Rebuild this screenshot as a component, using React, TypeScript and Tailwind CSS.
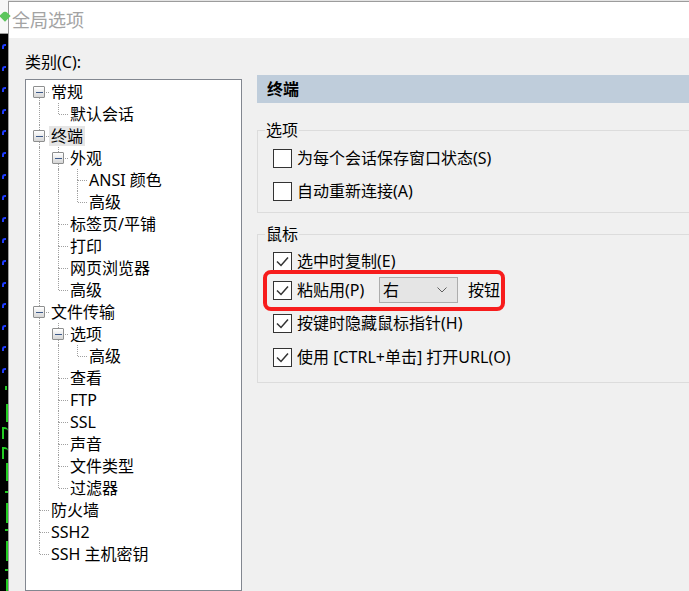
import React from "react";

type Node = { label: string; children?: Node[]; selected?: boolean };

const tree: Node[] = [
  { label: "常规", children: [{ label: "默认会话" }] },
  {
    label: "终端",
    selected: true,
    children: [
      { label: "外观", children: [{ label: "ANSI 颜色" }, { label: "高级" }] },
      { label: "标签页/平铺" },
      { label: "打印" },
      { label: "网页浏览器" },
      { label: "高级" },
    ],
  },
  {
    label: "文件传输",
    children: [
      { label: "选项", children: [{ label: "高级" }] },
      { label: "查看" },
      { label: "FTP" },
      { label: "SSL" },
      { label: "声音" },
      { label: "文件类型" },
      { label: "过滤器" },
    ],
  },
  { label: "防火墙" },
  { label: "SSH2" },
  { label: "SSH 主机密钥" },
];

type Row = {
  label: string;
  level: number;
  anc: boolean[];
  hasNext: boolean;
  first: boolean;
  hasChildren: boolean;
  selected?: boolean;
};

function flatten(nodes: Node[], level: number, anc: boolean[], out: Row[]) {
  nodes.forEach((n, i) => {
    const hasNext = i < nodes.length - 1;
    out.push({
      label: n.label,
      level,
      anc,
      hasNext,
      first: level === 0 && i === 0,
      hasChildren: !!n.children,
      selected: n.selected,
    });
    if (n.children) flatten(n.children, level + 1, [...anc, hasNext], out);
  });
  return out;
}

const rows = flatten(tree, 0, [], []);

function TreeRow({ r }: { r: Row }) {
  return (
    <div className="flex h-[22px] items-center">
      {r.anc.map((a, i) => (
        <div key={i} className="relative h-full w-[19px] shrink-0">
          {a && <div className="absolute left-[9px] top-0 bottom-0 border-l border-dotted border-[#a0a0a0]" />}
        </div>
      ))}
      <div className="relative h-full w-[19px] shrink-0">
        {!r.first && <div className="absolute left-[9px] top-0 h-[11px] border-l border-dotted border-[#a0a0a0]" />}
        {r.hasNext && <div className="absolute left-[9px] top-[11px] bottom-0 border-l border-dotted border-[#a0a0a0]" />}
        <div className="absolute left-[10px] right-0 top-[11px] border-t border-dotted border-[#a0a0a0]" />
        {r.hasChildren && (
          <div className="absolute left-[3px] top-[5px] flex h-[12px] w-[12px] items-center justify-center rounded-[1px] border border-[#8e8f8f] bg-gradient-to-b from-white to-[#d6d6d6]">
            <div className="h-[1px] w-[7px] bg-[#3d5a8a]" />
          </div>
        )}
      </div>
      <span
        className={
          "whitespace-nowrap px-[2px] leading-[20px] text-black " + (r.selected ? "bg-[#e6e6e6]" : "")
        }
      >
        {r.label}
      </span>
    </div>
  );
}

function CheckBox({ checked }: { checked?: boolean }) {
  return (
    <div className="flex h-[19px] w-[19px] shrink-0 items-center justify-center border border-[#333333] bg-white">
      {checked && (
        <svg width="17" height="17" viewBox="0 0 17 17">
          <polyline points="3,8.5 7,12.5 14,4.5" fill="none" stroke="#333333" strokeWidth="1.5" />
        </svg>
      )}
    </div>
  );
}

function BlueMark() {
  return (
    <div className="flex h-[21.6px] shrink-0 items-start pl-[2px] pt-[6px]">
      <div className="h-[5px] w-[4px] rounded-tl-[3px] border-l-2 border-t-2 border-[#1e3cff]" />
    </div>
  );
}

export default function App() {
  const blues = Array.from({ length: 16 });
  return (
    <div className="relative flex h-[591px] w-[689px] overflow-hidden bg-[#e4e4e4] font-['Noto_Sans','Noto_Sans_CJK_SC',sans-serif] text-[16px]">
      {/* background app strip */}
      <div className="flex w-[8px] shrink-0 flex-col">
        <div className="relative h-[34px] shrink-0 border-b border-[#9c9c9c] bg-[#f7f7f7]">
          <div className="absolute left-[1px] top-[12px] h-[8px] w-[8px] rotate-45 rounded-tl-[4px] bg-[#5cc55c]" />
        </div>
        <div className="flex flex-1 flex-col bg-black pt-[4px]">
          {blues.map((_, i) => (
            <BlueMark key={i} />
          ))}
          <div className="ml-[5px] mt-[2px] h-[4px] w-[2px] bg-[#22cc22]" />
          <div className="ml-[6px] mt-[14px] h-[18px] w-[2px] bg-[#22cc22]" />
          <div className="ml-[2px] mt-[5px] h-[12px] w-[6px] rounded-tr-[4px] border-l-2 border-t-2 border-[#22cc22]" />
          <div className="ml-[2px] mt-[8px] h-[12px] w-[6px] rounded-tr-[4px] border-l-2 border-t-2 border-[#22cc22]" />
          <div className="ml-[6px] mt-[4px] h-[18px] w-[2px] bg-[#22cc22]" />
          <div className="ml-[5px] mt-[10px] h-[2px] w-[3px] bg-[#22cc22]" />
          <div className="ml-[6px] mt-[10px] h-[20px] w-[2px] bg-[#22cc22]" />
          <div className="ml-[5px] mt-[6px] h-[2px] w-[3px] bg-[#22cc22]" />
          <div className="ml-[6px] mt-[10px] h-[20px] w-[2px] bg-[#22cc22]" />
          <div className="ml-[5px] mt-[8px] h-[2px] w-[3px] bg-[#22cc22]" />
          <div className="ml-[6px] mt-[8px] h-[20px] w-[2px] bg-[#22cc22]" />
        </div>
      </div>

      {/* dialog */}
      <div className="mt-[1px] flex flex-1 flex-col border-l border-t border-[#9c9c9c]">
        <div className="flex h-[36px] shrink-0 items-center bg-white pl-[3px]">
          <span className="text-[18px] leading-[24px] text-[#a3a3a3]">全局选项</span>
        </div>
        <div className="flex flex-1 bg-[#f0f0f0] pl-[16px] pt-[14px]">
          {/* left column */}
          <div className="flex w-[217px] shrink-0 flex-col">
            <div className="h-[20px] leading-[20px] text-black">类别(C):</div>
            <div className="mt-[7px] flex-1 border border-[#828790] bg-white pl-[4px] pt-[1px]">
              {rows.map((r, i) => (
                <TreeRow key={i} r={r} />
              ))}
            </div>
          </div>

          {/* right column */}
          <div className="ml-[15px] flex w-[460px] shrink-0 flex-col">
            <div className="mt-[23px] flex h-[28px] items-center bg-[#bfcddb] pl-[10px]">
              <span className="font-bold leading-[20px] text-black">终端</span>
            </div>

            <fieldset className="mt-[17px] border border-[#dcdcdc] px-[15px] pb-[11px]">
              <legend className="-ml-[8px] px-[1px] leading-[20px] text-black">选项</legend>
              <div className="mt-[8px] flex h-[20px] items-center gap-[5px]">
                <CheckBox />
                <span className="leading-[20px] text-black">为每个会话保存窗口状态(S)</span>
              </div>
              <div className="mt-[13px] flex h-[20px] items-center gap-[5px]">
                <CheckBox />
                <span className="leading-[20px] text-black">自动重新连接(A)</span>
              </div>
            </fieldset>

            <fieldset className="mt-[11px] border border-[#dcdcdc] px-[15px] pb-[15px]">
              <legend className="-ml-[8px] px-[1px] leading-[20px] text-black">鼠标</legend>
              <div className="mt-[7px] flex h-[20px] items-center gap-[5px]">
                <CheckBox checked />
                <span className="leading-[20px] text-black">选中时复制(E)</span>
              </div>
              <div className="mt-[6px] flex h-[26px] items-center">
                <CheckBox checked />
                <span className="ml-[5px] w-[82px] leading-[20px] text-black">粘贴用(P)</span>
                <div className="flex h-[26px] w-[79px] items-center justify-between border border-[#adadad] bg-[#e5e5e5] pl-[3px] pr-[10px]">
                  <span className="leading-[20px] text-black">右</span>
                  <svg width="10" height="6" viewBox="0 0 10 6">
                    <polyline points="0.5,0.5 5,5 9.5,0.5" fill="none" stroke="#606060" strokeWidth="1" />
                  </svg>
                </div>
                <span className="ml-[10px] leading-[20px] text-black">按钮</span>
              </div>
              <div className="mt-[10px] flex h-[20px] items-center gap-[5px]">
                <CheckBox checked />
                <span className="leading-[20px] text-black">按键时隐藏鼠标指针(H)</span>
              </div>
              <div className="mt-[14px] flex h-[20px] items-center gap-[5px]">
                <CheckBox checked />
                <span className="leading-[20px] text-black">使用 [CTRL+单击] 打开URL(O)</span>
              </div>
            </fieldset>
          </div>
        </div>
      </div>

      {/* red annotation */}
      <div className="absolute left-[263px] top-[270px] h-[41px] w-[242px] rounded-[8px] border-[4px] border-[#f71c1c]" />
    </div>
  );
}
